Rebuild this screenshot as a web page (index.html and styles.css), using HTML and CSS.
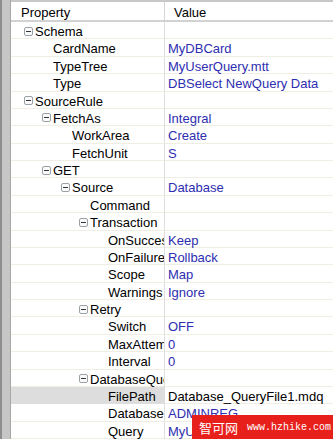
FILE: index.html
```html
<!DOCTYPE html>
<html>
<head>
<meta charset="utf-8">
<link rel="stylesheet" href="styles.css">
</head>
<body>
<div class="frame">
  <div class="strip"></div>
  <div class="grid">
    <div class="header">
      <div class="hcell hname">Property</div>
      <div class="hcell hvalue">Value</div>
    </div>
    <div class="rows">
      <div class="row"><div class="name g0"><svg class="exp" width="9" height="9" viewBox="0 0 9 9"><rect x="0.5" y="0.5" width="8" height="8" rx="1.5"/><line x1="2" y1="4.5" x2="7" y2="4.5"/></svg>Schema</div><div class="value"></div></div>
      <div class="row"><div class="name l1">CardName</div><div class="value">MyDBCard</div></div>
      <div class="row"><div class="name l1">TypeTree</div><div class="value">MyUserQuery.mtt</div></div>
      <div class="row"><div class="name l1">Type</div><div class="value">DBSelect NewQuery Data</div></div>
      <div class="row"><div class="name g0"><svg class="exp" width="9" height="9" viewBox="0 0 9 9"><rect x="0.5" y="0.5" width="8" height="8" rx="1.5"/><line x1="2" y1="4.5" x2="7" y2="4.5"/></svg>SourceRule</div><div class="value"></div></div>
      <div class="row"><div class="name g1"><svg class="exp" width="9" height="9" viewBox="0 0 9 9"><rect x="0.5" y="0.5" width="8" height="8" rx="1.5"/><line x1="2" y1="4.5" x2="7" y2="4.5"/></svg>FetchAs</div><div class="value">Integral</div></div>
      <div class="row"><div class="name l2">WorkArea</div><div class="value">Create</div></div>
      <div class="row"><div class="name l2">FetchUnit</div><div class="value">S</div></div>
      <div class="row"><div class="name g1"><svg class="exp" width="9" height="9" viewBox="0 0 9 9"><rect x="0.5" y="0.5" width="8" height="8" rx="1.5"/><line x1="2" y1="4.5" x2="7" y2="4.5"/></svg>GET</div><div class="value"></div></div>
      <div class="row"><div class="name g2"><svg class="exp" width="9" height="9" viewBox="0 0 9 9"><rect x="0.5" y="0.5" width="8" height="8" rx="1.5"/><line x1="2" y1="4.5" x2="7" y2="4.5"/></svg>Source</div><div class="value">Database</div></div>
      <div class="row"><div class="name l3">Command</div><div class="value"></div></div>
      <div class="row"><div class="name g3"><svg class="exp" width="9" height="9" viewBox="0 0 9 9"><rect x="0.5" y="0.5" width="8" height="8" rx="1.5"/><line x1="2" y1="4.5" x2="7" y2="4.5"/></svg>Transaction</div><div class="value"></div></div>
      <div class="row"><div class="name l4">OnSuccess</div><div class="value">Keep</div></div>
      <div class="row"><div class="name l4">OnFailure</div><div class="value">Rollback</div></div>
      <div class="row"><div class="name l4">Scope</div><div class="value">Map</div></div>
      <div class="row"><div class="name l4">Warnings</div><div class="value">Ignore</div></div>
      <div class="row"><div class="name g3"><svg class="exp" width="9" height="9" viewBox="0 0 9 9"><rect x="0.5" y="0.5" width="8" height="8" rx="1.5"/><line x1="2" y1="4.5" x2="7" y2="4.5"/></svg>Retry</div><div class="value"></div></div>
      <div class="row"><div class="name l4">Switch</div><div class="value">OFF</div></div>
      <div class="row"><div class="name l4">MaxAttempts</div><div class="value">0</div></div>
      <div class="row"><div class="name l4">Interval</div><div class="value">0</div></div>
      <div class="row"><div class="name g3"><svg class="exp" width="9" height="9" viewBox="0 0 9 9"><rect x="0.5" y="0.5" width="8" height="8" rx="1.5"/><line x1="2" y1="4.5" x2="7" y2="4.5"/></svg>DatabaseQuery</div><div class="value"></div></div>
      <div class="row selected"><div class="name l4">FilePath</div><div class="value plain">Database_QueryFile1.mdq</div></div>
      <div class="row"><div class="name l4">Database</div><div class="value">ADMINREG</div></div>
      <div class="row"><div class="name l4">Query</div><div class="value">MyUserQuery</div></div>
    </div>
    <div class="watermark"><span class="wm-cn">智可网</span><span class="wm-url">www.hzhike.com</span></div>
  </div>
</div>
</body>
</html>
```
FILE: styles.css
```css
html, body {
  margin: 0;
  padding: 0;
  background: #ffffff;
}
.frame {
  display: flex;
  width: 333px;
  height: 439px;
  overflow: hidden;
  font-family: "Liberation Sans", Arial, sans-serif;
  font-size: 13px;
  color: #000000;
}
.strip {
  width: 8px;
  flex: none;
  background: #c6c6c6;
  border-left: 2px solid #8e8e8e;
  border-right: 1px solid #a8a8a8;
}
.grid {
  flex: 1;
  position: relative;
  overflow: hidden;
  background: #ffffff;
}
.header {
  display: grid;
  grid-template-columns: 153px 1fr;
  height: 18px;
  border-top: 2px solid #c8c8c8;
  border-bottom: 2px solid #d2d2d2;
  background: #ffffff;
}
.hcell {
  display: flex;
  align-items: center;
  padding-top: 3px;
  white-space: nowrap;
  overflow-x: clip;
}
.hname {
  padding-left: 10px;
}
.hvalue {
  padding-left: 9px;
  border-left: 1px solid #d6d6d6;
}
.rows {
  display: grid;
  grid-auto-rows: 17.375px;
}
.row {
  display: grid;
  grid-template-columns: 153px 1fr;
  border-bottom: 1px solid #f0ede2;
  box-sizing: border-box;
}
.name {
  display: flex;
  align-items: center;
  padding-top: 2px;
  white-space: nowrap;
  overflow-x: clip;
}
.value {
  display: flex;
  align-items: center;
  padding-top: 2px;
  white-space: nowrap;
  overflow-x: clip;
  padding-left: 3px;
  border-left: 1px solid #dedede;
  color: #2e2eb0;
}
.value.plain {
  color: #000000;
}
.selected .name {
  background: #dddddd;
}
.g0 { padding-left: 13px; }
.g1 { padding-left: 31px; }
.g2 { padding-left: 50px; }
.g3 { padding-left: 68px; }
.l1 { padding-left: 42px; }
.l2 { padding-left: 61px; }
.l3 { padding-left: 79px; }
.l4 { padding-left: 97px; }
.exp {
  flex: none;
  margin-right: 2px;
  margin-top: -1px;
}
.exp rect {
  fill: #fafafa;
  stroke: #9aa2a6;
  stroke-width: 1;
}
.exp line {
  stroke: #333333;
  stroke-width: 1;
}
.watermark {
  position: absolute;
  right: 0;
  bottom: 0;
  width: 141px;
  height: 24px;
  background: #e8201c;
  display: flex;
  align-items: center;
  color: #ffffff;
}
.wm-cn {
  font-family: "Noto Sans CJK SC", sans-serif;
  font-size: 13px;
  padding-left: 7px;
  margin-right: 9px;
}
.wm-url {
  font-family: "Liberation Mono", monospace;
  font-size: 10px;
}
```
